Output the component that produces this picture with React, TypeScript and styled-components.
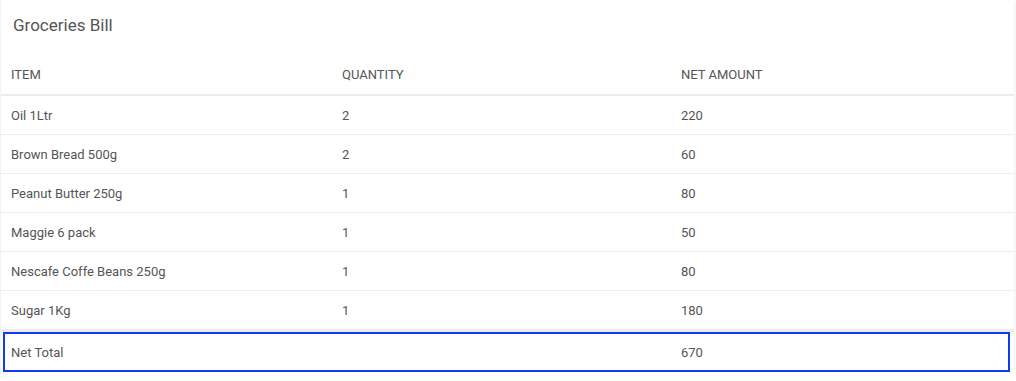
import React, { FC } from "react";
import styled, { createGlobalStyle } from "styled-components";

const GlobalStyle = createGlobalStyle`
  body {
    margin: 0;
    background: #ffffff;
    font-family: Roboto, "Liberation Sans", Arial, sans-serif;
  }
`;

const Card = styled.div`
  width: 1013px;
  margin-left: 1px;
  padding-bottom: 3px;
  background: #fff;
  box-shadow: 0 1px 3px rgba(0, 0, 0, 0.14);
  color: #555;
`;

const Title = styled.h2`
  margin: 0;
  padding: 15px 12px 0;
  height: 36px;
  font-size: 17px;
  font-weight: 400;
  line-height: 20px;
  color: #555;
`;

const Row = styled.div<{ $head?: boolean; $total?: boolean }>`
  display: grid;
  grid-template-columns: 331px 339px 1fr;
  align-items: center;
  font-size: 13px;
  line-height: 15px;
  padding: ${({ $head, $total }) =>
    $head ? "16px 10px 12px" : $total ? "11px 6px 10px" : "12px 10px 11px"};
  border-bottom: ${({ $head, $total }) =>
    $total ? "none" : $head ? "2px solid #ececec" : "1px solid #eeeeee"};
  ${({ $total }) =>
    $total &&
    `
    margin: 0 4px 0 2px;
    border: 2px solid #0d3bf2;
  `}
`;

const LastRow = styled(Row)`
  border-bottom: 3px solid #ececec;
`;

const items = [
  { name: "Oil 1Ltr", qty: 2, amount: 220 },
  { name: "Brown Bread 500g", qty: 2, amount: 60 },
  { name: "Peanut Butter 250g", qty: 1, amount: 80 },
  { name: "Maggie 6 pack", qty: 1, amount: 50 },
  { name: "Nescafe Coffe Beans 250g", qty: 1, amount: 80 },
  { name: "Sugar 1Kg", qty: 1, amount: 180 },
];

const App: FC = () => {
  const total = items.reduce((s, i) => s + i.amount, 0);
  return (
    <>
      <GlobalStyle />
      <Card>
        <Title>Groceries Bill</Title>
        <Row $head>
          <span>ITEM</span>
          <span>QUANTITY</span>
          <span>NET AMOUNT</span>
        </Row>
        {items.map((item, i) => {
          const R = i === items.length - 1 ? LastRow : Row;
          return (
            <R key={item.name}>
              <span>{item.name}</span>
              <span>{item.qty}</span>
              <span>{item.amount}</span>
            </R>
          );
        })}
        <Row $total>
          <span>Net Total</span>
          <span />
          <span>{total}</span>
        </Row>
      </Card>
    </>
  );
};

export default App;
